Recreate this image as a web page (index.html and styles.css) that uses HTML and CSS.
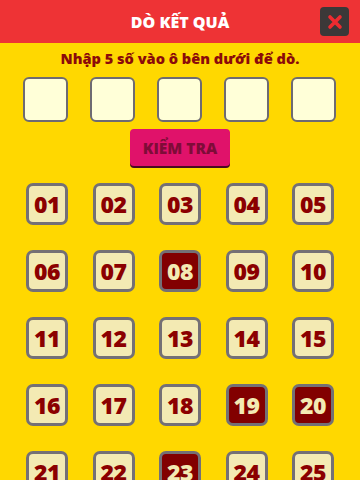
FILE: index.html
```
<!DOCTYPE html>
<html lang="vi">
<head>
<meta charset="UTF-8">
<meta name="viewport" content="width=device-width, initial-scale=1.0">
<title>Dò kết quả</title>
<link rel="stylesheet" href="styles.css">
</head>
<body>

<div class="header">
  <h1 class="title">DÒ KẾT QUẢ</h1>
  <button class="close-btn">
    <svg width="16" height="16" viewBox="0 0 16 16"><path d="M3 3 L13 13 M13 3 L3 13" stroke="#ED2B30" stroke-width="3.6" stroke-linecap="round"/></svg>
  </button>
</div>

<p class="hint">Nhập 5 số vào ô bên dưới để dò.</p>

<!-- input boxes -->
<div class="input-row">
  <input class="num-input" type="text" maxlength="2">
  <input class="num-input" type="text" maxlength="2">
  <input class="num-input" type="text" maxlength="2">
  <input class="num-input" type="text" maxlength="2">
  <input class="num-input" type="text" maxlength="2">
</div>

<div class="check-wrap">
  <button class="check-btn">KIỂM TRA</button>
</div>

<!-- result numbers -->
<div class="grid">
  <div class="cell">01</div>
  <div class="cell">02</div>
  <div class="cell">03</div>
  <div class="cell">04</div>
  <div class="cell">05</div>
  <div class="cell">06</div>
  <div class="cell">07</div>
  <div class="cell active">08</div>
  <div class="cell">09</div>
  <div class="cell">10</div>
  <div class="cell">11</div>
  <div class="cell">12</div>
  <div class="cell">13</div>
  <div class="cell">14</div>
  <div class="cell">15</div>
  <div class="cell">16</div>
  <div class="cell">17</div>
  <div class="cell">18</div>
  <div class="cell active">19</div>
  <div class="cell active">20</div>
  <div class="cell">21</div>
  <div class="cell">22</div>
  <div class="cell active">23</div>
  <div class="cell">24</div>
  <div class="cell">25</div>
</div>

</body>
</html>
```
FILE: styles.css
```
body {
margin: 0;
padding: 0;
background-color: #FFD800;
font-family: "Open Sans", "DejaVu Sans", sans-serif;
overflow: hidden;
}

.header {
height: 43px;
background-color: #EE3335;
display: flex;
align-items: center;
justify-content: center;
position: relative;
}

.title {
margin: 0;
color: #fff;
font-size: 16px;
font-weight: 800;
}

.close-btn {
position: absolute;
right: 11px;
top: 7px;
width: 29px;
height: 29px;
border: none;
border-radius: 4px;
background-color: #3B3838;
padding: 0;
display: flex;
align-items: center;
justify-content: center;
}

.hint {
margin: 4px 0 0;
text-align: center;
color: #8B0A0A;
font-size: 14.6px;
font-weight: 800;
line-height: 22px;
}

.input-row {
display: flex;
gap: 22px;
padding: 0 23px;
margin-top: 8px;
}

.num-input {
width: 45px;
height: 45px;
box-sizing: border-box;
border: 2px solid #6E6B72;
border-radius: 6px;
background-color: #FFFFD8;
}

.check-wrap {
display: flex;
justify-content: center;
margin-top: 7px;
}

.check-btn {
width: 100px;
height: 37px;
border: none;
border-radius: 4px;
background-color: #E0126A;
box-shadow: 0 2px 0 #4A0A22;
color: #7E0C38;
font-family: "Open Sans", "DejaVu Sans", sans-serif;
font-size: 15.5px;
font-weight: 800;
padding: 0;
}

.grid {
display: grid;
grid-template-columns: repeat(5, 42px);
justify-content: space-between;
row-gap: 25px;
padding: 0 26px;
margin-top: 17px;
}

.cell {
width: 42px;
height: 42px;
box-sizing: border-box;
border: 3px solid #747075;
border-radius: 7px;
background-color: #F3EAB3;
color: #8B0000;
display: flex;
align-items: center;
justify-content: center;
font-size: 23px;
font-weight: 800;
letter-spacing: -0.5px;
}

.cell.active {
background-color: #820000;
color: #F3EAB3;
}
```
